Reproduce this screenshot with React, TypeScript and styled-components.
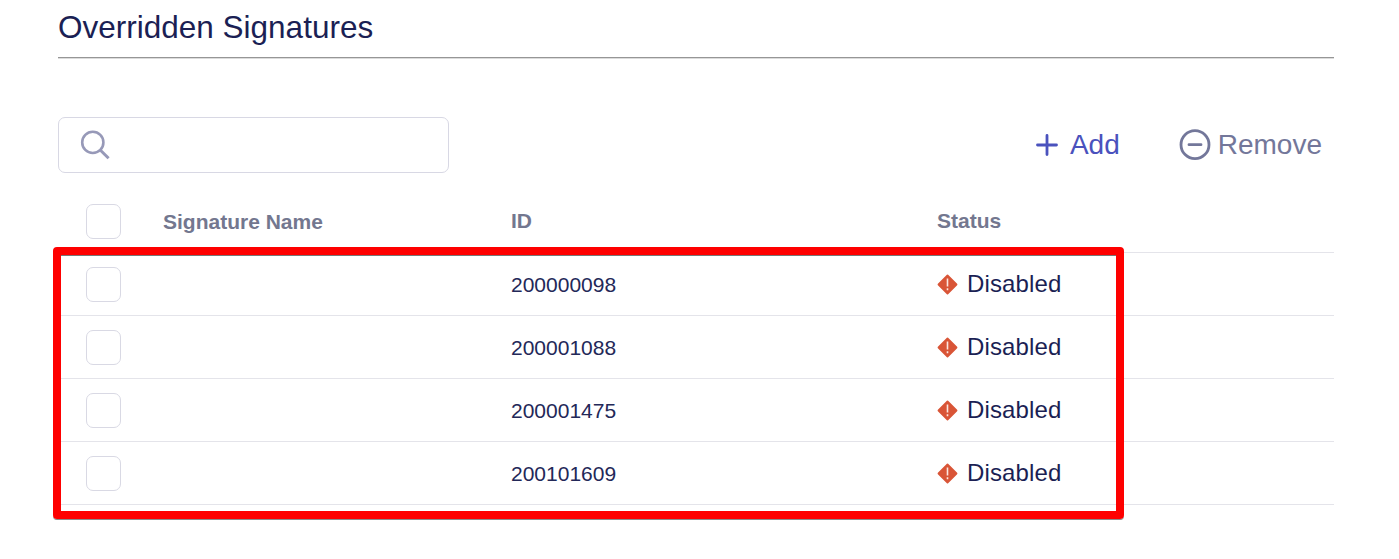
import React from "react";
import styled, { createGlobalStyle } from "styled-components";

const GlobalStyle = createGlobalStyle`
  * { box-sizing: border-box; }
  body {
    margin: 0;
    background: #fff;
    font-family: "Liberation Sans", Arial, sans-serif;
    overflow: hidden;
  }
`;

const Page = styled.main`
  height: 559px;
  padding: 0 65px 0 58px;
`;

const Title = styled.h1`
  height: 59px;
  margin: 0;
  padding-top: 9px;
  border-bottom: 1px solid #dcdcdc;
  box-shadow: inset 0 -1px 0 #969696;
  color: #1b1f54;
  font-size: 31.5px;
  font-weight: 400;
  line-height: 36px;
`;

const Toolbar = styled.div`
  display: flex;
  align-items: center;
  height: 56px;
  margin-top: 58px;
`;

const SearchBox = styled.label`
  display: flex;
  align-items: center;
  width: 391px;
  height: 56px;
  padding-left: 21px;
  border: 1px solid #d8d8e4;
  border-radius: 7px;
`;

const SearchInput = styled.input`
  flex: 1;
  min-width: 0;
  border: 0;
  outline: 0;
  background: transparent;
  font: 24px "Liberation Sans", Arial, sans-serif;
`;

const Actions = styled.div`
  display: flex;
  align-items: center;
  gap: 59px;
  margin-left: auto;
  padding-right: 12px;
`;

const Action = styled.button<{ $color: string; $gap: number }>`
  display: flex;
  align-items: center;
  gap: ${(p) => p.$gap}px;
  padding: 0;
  border: 0;
  background: none;
  color: ${(p) => p.$color};
  font: 28px/32px "Liberation Sans", Arial, sans-serif;
`;

const TableArea = styled.section`
  position: relative;
  margin-top: 17px;
`;

const Row = styled.div<{ $head?: boolean }>`
  display: grid;
  grid-template-columns: 105px 348px 426px 1fr;
  align-items: center;
  height: 63px;
  border-bottom: 1px solid #e4e4ea;
  color: ${(p) => (p.$head ? "#73778f" : "#232858")};
  font-size: 21px;
  font-weight: ${(p) => (p.$head ? 700 : 400)};
  line-height: 24px;
`;

const Checkbox = styled.input`
  appearance: none;
  width: 35px;
  height: 35px;
  margin: 0 0 0 28px;
  border: 1px solid #d9d9e4;
  border-radius: 7px;
  background: #fff;
`;

const Cell = styled.span<{ $drop?: number }>`
  padding-top: ${(p) => p.$drop ?? 2}px;
`;

const Status = styled.span`
  display: flex;
  align-items: center;
  gap: 9px;
  color: #1b1f54;
  font-size: 24px;
  letter-spacing: 0.15px;
`;

const Highlight = styled.div`
  position: absolute;
  top: 57px;
  left: -5px;
  width: 1071px;
  height: 272px;
  border: 8px solid #fe0000;
  border-radius: 4px;
  box-shadow: 0 1px 0 #8b8b8b, inset 0 1px 0 #777;
  pointer-events: none;
`;

const SearchIcon = () => (
  <svg width="32" height="32" viewBox="0 0 32 32" fill="none" stroke="#9799b8" strokeWidth="2.6">
    <circle cx="12.8" cy="13.4" r="10.6" />
    <path d="M20.2 21L28.6 29.3" strokeWidth="3" />
  </svg>
);

const PlusIcon = () => (
  <svg width="22" height="22" viewBox="0 0 22 22" fill="none" stroke="currentColor" strokeWidth="2.8" strokeLinecap="round">
    <path d="M11 1.5V20.5M1.5 11H20.5" />
  </svg>
);

const MinusCircleIcon = () => (
  <svg width="32" height="32" viewBox="0 0 32 32" fill="none" stroke="currentColor" strokeWidth="2.8" strokeLinecap="round">
    <circle cx="16" cy="15.7" r="14" />
    <path d="M10 15.7H22" />
  </svg>
);

const AlertIcon = () => (
  <svg width="21" height="21" viewBox="0 0 21 21">
    <path d="M10.5 1.5L19.5 10.5L10.5 19.5L1.5 10.5Z" fill="#d95537" stroke="#d95537" strokeWidth="1.8" strokeLinejoin="round" />
    <path d="M10.5 4.5V12.5M10.5 14.2V16.2" stroke="#fbe6e0" strokeWidth="1.6" />
  </svg>
);

const signatureIds = ["200000098", "200001088", "200001475", "200101609"];

export default function App() {
  return (
    <>
      <GlobalStyle />
      <Page>
        <Title>Overridden Signatures</Title>
        <Toolbar>
          <SearchBox>
            <SearchIcon />
            <SearchInput type="text" />
          </SearchBox>
          <Actions>
            <Action $color="#4a52bd" $gap={12}>
              <PlusIcon />
              Add
            </Action>
            <Action $color="#73779a" $gap={7}>
              <MinusCircleIcon />
              Remove
            </Action>
          </Actions>
        </Toolbar>
        <TableArea>
          <Row $head>
            <Checkbox type="checkbox" />
            <Cell>Signature Name</Cell>
            <Cell $drop={0}>ID</Cell>
            <Cell $drop={0}>Status</Cell>
          </Row>
          {signatureIds.map((id) => (
            <Row key={id}>
              <Checkbox type="checkbox" />
              <Cell />
              <Cell>{id}</Cell>
              <Status>
                <AlertIcon />
                <span>Disabled</span>
              </Status>
            </Row>
          ))}
          <Highlight />
        </TableArea>
      </Page>
    </>
  );
}
